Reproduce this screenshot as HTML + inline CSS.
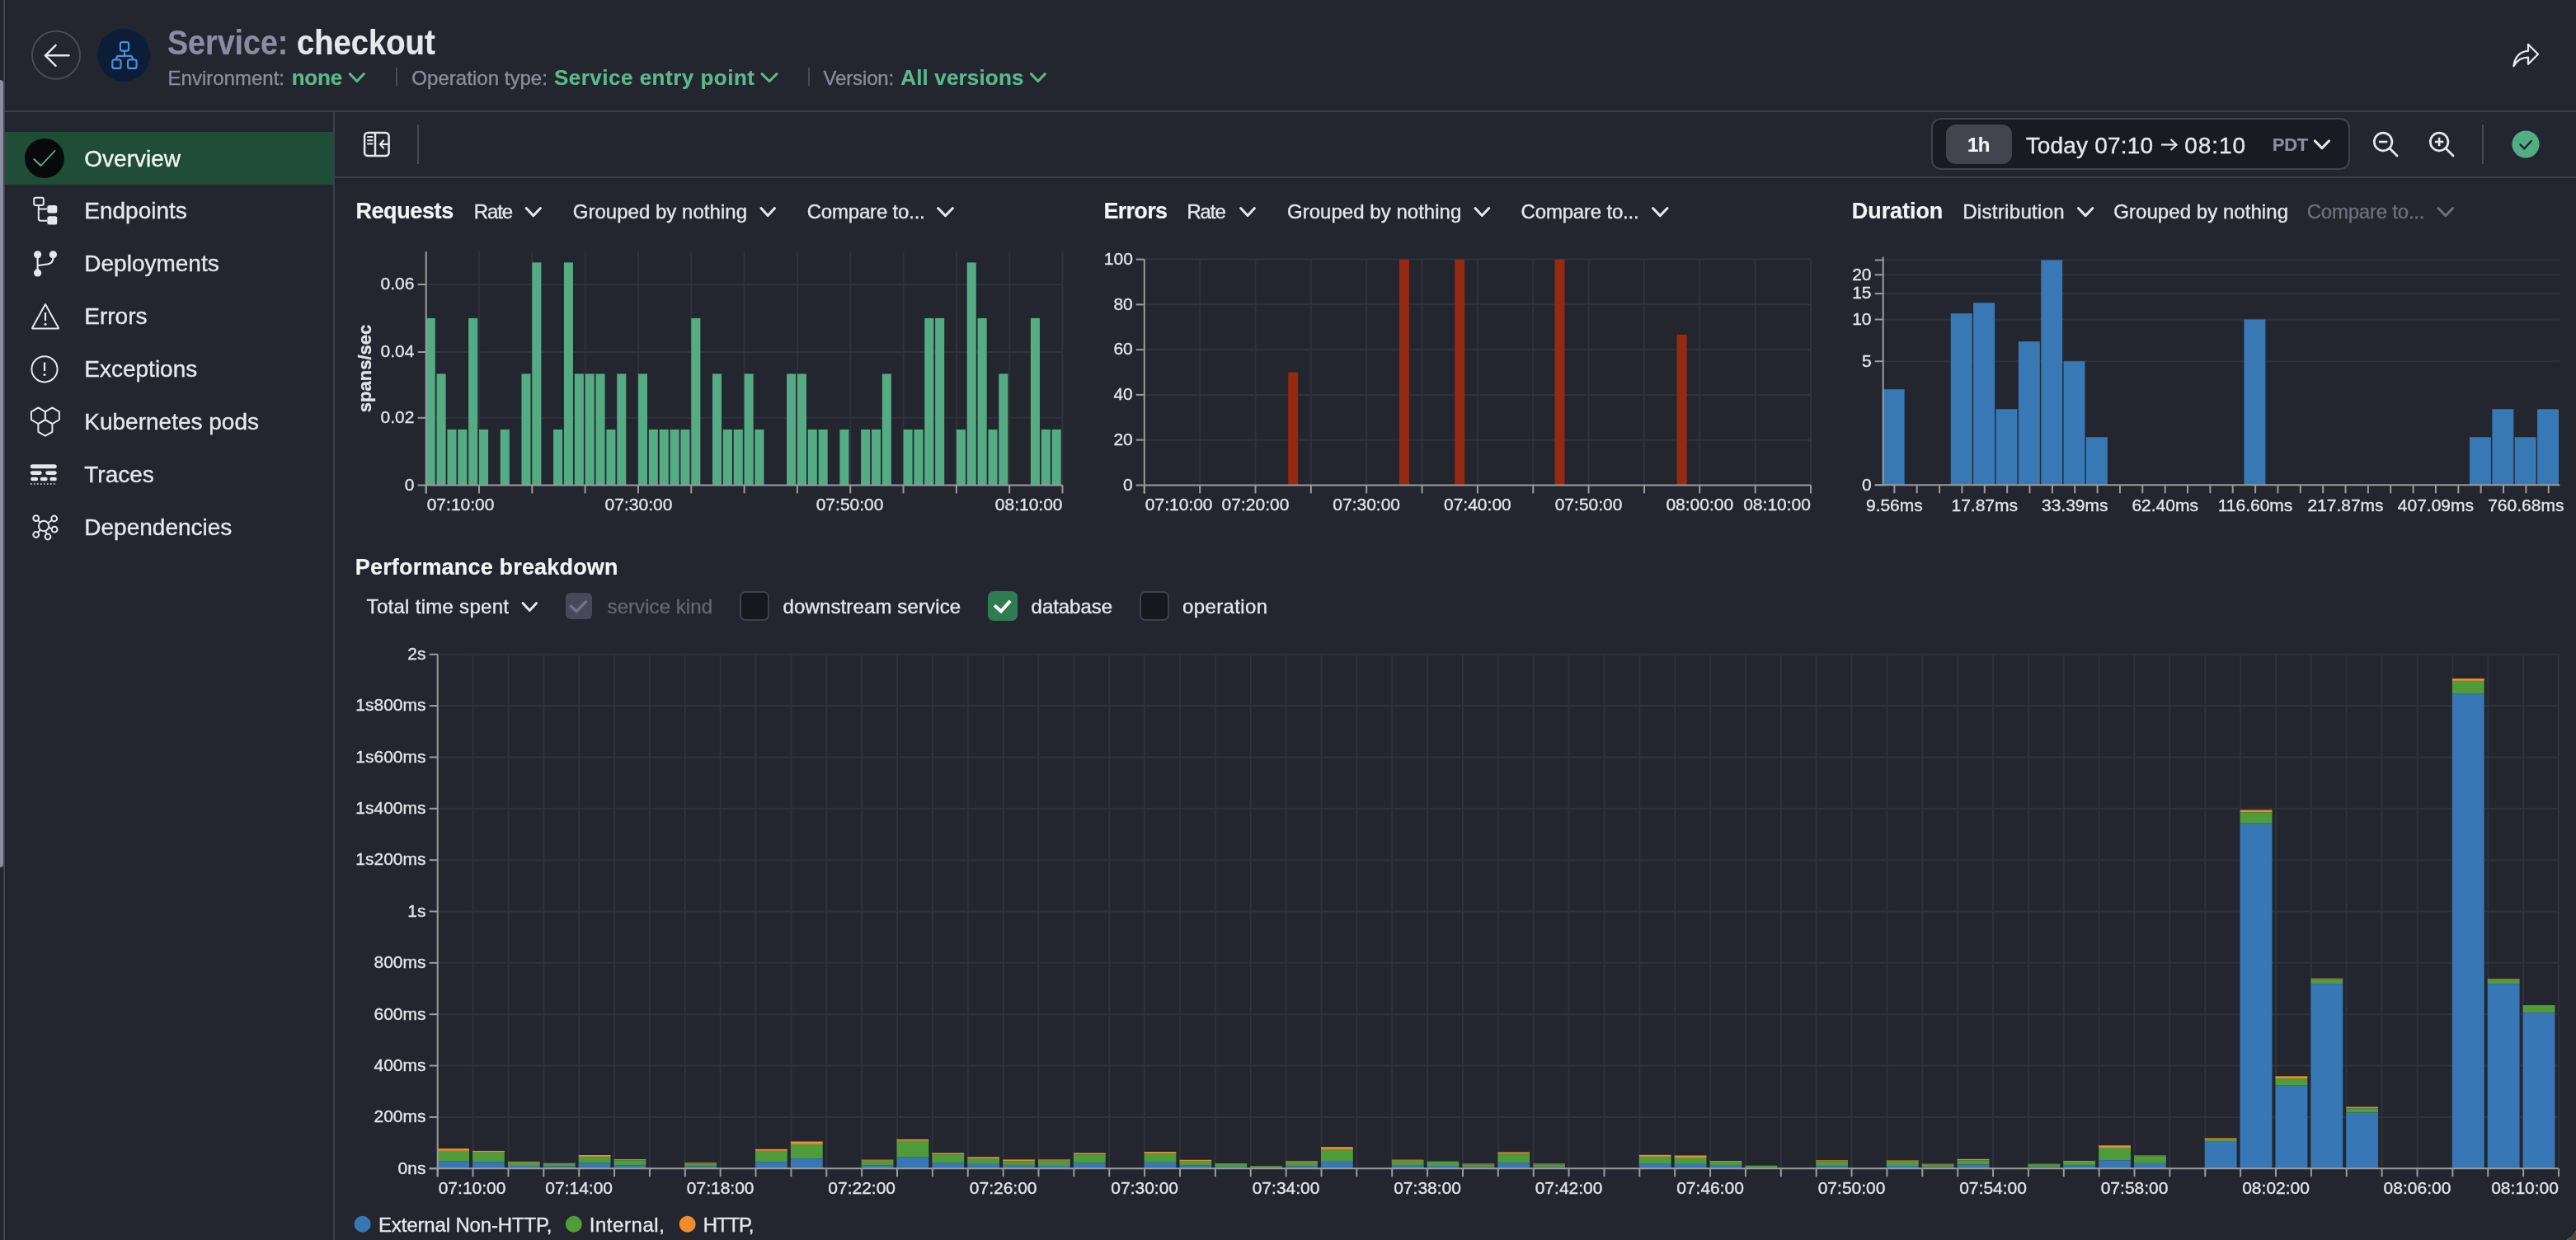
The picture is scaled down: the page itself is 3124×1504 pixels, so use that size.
<!DOCTYPE html><html><head><meta charset="utf-8"><title>Service: checkout</title><style>
html,body{margin:0;padding:0;width:3124px;height:1504px;overflow:hidden;background:#23262e;}
.t{position:absolute;font-family:"Liberation Sans",sans-serif;white-space:pre;-webkit-font-smoothing:antialiased;-webkit-text-stroke:0.35px currentColor;}
#tx{position:absolute;left:0;top:0;width:3124px;height:1504px;will-change:transform;}
</style></head><body>
<div style="position:absolute;left:3px;top:0;width:1px;height:1504px;background:#1f2026"></div>
<div style="position:absolute;left:0;top:97px;width:4px;height:955px;background:#8b8da1;border-radius:0 4px 4px 0"></div>
<div style="position:absolute;left:4px;top:0;width:2px;height:1504px;background:#454654"></div>
<div style="position:absolute;left:6px;top:0;width:1px;height:1504px;background:#1f2026"></div>
<div style="position:absolute;left:6px;top:134px;width:3118px;height:2px;background:#3b3e4a"></div>
<div style="position:absolute;left:479.5px;top:82px;width:2px;height:21.5px;background:#474957"></div>
<div style="position:absolute;left:980px;top:82px;width:2px;height:21.5px;background:#474957"></div>
<div style="position:absolute;left:404px;top:136px;width:2px;height:1368px;background:#3b3e4a"></div>
<div style="position:absolute;left:6px;top:160px;width:398px;height:64px;background:#1f4d37"></div>
<div style="position:absolute;left:406px;top:214px;width:2718px;height:2px;background:#3b3e4a"></div>
<div style="position:absolute;left:506px;top:151px;width:2px;height:48px;background:#464856"></div>
<div style="position:absolute;left:2342.4px;top:143px;width:507.3px;height:63px;box-sizing:border-box;border:2px solid #40424f;border-radius:12px;background:#1a1b22"></div>
<div style="position:absolute;left:2360.2px;top:151.1px;width:79.5px;height:48px;border-radius:12px;background:#42444f"></div>
<div style="position:absolute;left:3010px;top:151px;width:2px;height:48px;background:#464856"></div>
<div style="position:absolute;left:686.2px;top:719.4px;width:31.4px;height:31.5px;border-radius:6px;background:#474959"></div>
<div style="position:absolute;left:897.3px;top:717.4px;width:35.6px;height:35.4px;box-sizing:border-box;border-radius:7px;background:#17181e;border:2px solid #3e404d"></div>
<div style="position:absolute;left:1198px;top:717.1px;width:35.8px;height:35.8px;border-radius:7px;background:#2f7b52"></div>
<div style="position:absolute;left:1382.3px;top:717.4px;width:35.6px;height:35.4px;box-sizing:border-box;border-radius:7px;background:#17181e;border:2px solid #3e404d"></div>
<svg width="3124" height="1504" viewBox="0 0 3124 1504" style="position:absolute;left:0;top:0">
<circle cx="68" cy="66.8" r="29" fill="none" stroke="#474957" stroke-width="2"/>
<polyline points="67.6,54.8 55,67.3 67.6,79.8" fill="none" stroke="#e6e7eb" stroke-width="2.4" stroke-linecap="round" stroke-linejoin="round"/>
<line x1="55" y1="67.3" x2="83.5" y2="67.3" stroke="#e6e7eb" stroke-width="2.4" stroke-linecap="round"/>
<circle cx="150.1" cy="67" r="32" fill="#0c1e37"/>
<rect x="145.9" y="51.1" width="10.2" height="10.6" rx="2.5" fill="none" stroke="#4f8fd6" stroke-width="2.2"/>
<rect x="136.3" y="72.3" width="10.2" height="10.6" rx="2.5" fill="none" stroke="#4f8fd6" stroke-width="2.2"/>
<rect x="155.1" y="72.3" width="10.5" height="10.6" rx="2.5" fill="none" stroke="#4f8fd6" stroke-width="2.2"/>
<path d="M151,61.7 V67.8 M141.4,72.3 V70.5 Q141.4,67.8 144,67.8 H158 Q160.6,67.8 160.6,70.5 V72.3" fill="none" stroke="#4f8fd6" stroke-width="2.2"/>
<polyline points="424.3,89.6 432.8,98.5 441.3,89.6" fill="none" stroke="#5bb98c" stroke-width="3" stroke-linecap="round" stroke-linejoin="round"/>
<polyline points="924.0,89.6 933.0,98.5 942.0,89.6" fill="none" stroke="#5bb98c" stroke-width="3" stroke-linecap="round" stroke-linejoin="round"/>
<polyline points="1250.4,89.6 1258.8,98.5 1267.3,89.6" fill="none" stroke="#5bb98c" stroke-width="3" stroke-linecap="round" stroke-linejoin="round"/>
<path d="M3048.4,80.2 C3049.5,69 3056.5,62 3066,61.8 V53.8 L3078,65.8 L3066,77.8 V69.6 C3058,69.6 3052.5,72.5 3048.4,80.2 Z" fill="none" stroke="#e6e7eb" stroke-width="2.3" stroke-linejoin="round"/>
<circle cx="54" cy="192" r="24" fill="#08090b"/>
<polyline points="41.2,193 49.6,201 66.5,183" fill="none" stroke="#5bb98c" stroke-width="1.8" stroke-linecap="round" stroke-linejoin="round"/>
<rect x="41.2" y="239.8" width="11.6" height="9.2" rx="2" fill="none" stroke="#e6e7eb" stroke-width="2"/>
<path d="M46.8,249 V265 Q46.8,267.8 49.5,267.8 H57" fill="none" stroke="#e6e7eb" stroke-width="2"/>
<path d="M46.8,253.5 H57" fill="none" stroke="#e6e7eb" stroke-width="2"/>
<rect x="57.3" y="249" width="12" height="9.6" rx="2.5" fill="#e6e7eb"/>
<rect x="57.3" y="262.2" width="12" height="10.4" rx="2.5" fill="#e6e7eb"/>
<circle cx="45.6" cy="308.8" r="4.6" fill="#e6e7eb"/><circle cx="64.4" cy="308.8" r="4.6" fill="#e6e7eb"/><circle cx="45.6" cy="330.9" r="4.6" fill="#e6e7eb"/>
<path d="M45.6,309 V331 M64.4,309 V313 Q64.4,319.5 57,320.5 L45.6,322" fill="none" stroke="#e6e7eb" stroke-width="2.2"/>
<path d="M55,369 L70.8,397.5 Q71.2,398.6 70,398.6 H40 Q38.8,398.6 39.2,397.5 Z" fill="none" stroke="#e6e7eb" stroke-width="2" stroke-linejoin="round"/>
<line x1="55" y1="379" x2="55" y2="389" stroke="#e6e7eb" stroke-width="2.2"/><circle cx="55" cy="393.2" r="1.5" fill="#e6e7eb"/>
<circle cx="54" cy="447.8" r="15.6" fill="none" stroke="#e6e7eb" stroke-width="2"/>
<line x1="54" y1="439.5" x2="54" y2="450" stroke="#e6e7eb" stroke-width="2.2"/><circle cx="54" cy="454.5" r="1.5" fill="#e6e7eb"/>
<polygon points="54.90,509.10 46.41,514.00 37.93,509.10 37.93,499.30 46.41,494.40 54.90,499.30" fill="none" stroke="#e6e7eb" stroke-width="2" stroke-linejoin="round"/>
<polygon points="71.87,509.10 63.39,514.00 54.90,509.10 54.90,499.30 63.39,494.40 71.87,499.30" fill="none" stroke="#e6e7eb" stroke-width="2" stroke-linejoin="round"/>
<polygon points="63.39,523.80 54.90,528.70 46.41,523.80 46.41,514.00 54.90,509.10 63.39,514.00" fill="none" stroke="#e6e7eb" stroke-width="2" stroke-linejoin="round"/>
<rect x="36.8" y="563.3" width="32" height="5" rx="2.5" fill="#e6e7eb"/>
<rect x="36.8" y="571.3" width="14" height="4.6" rx="2.3" fill="#e6e7eb"/><rect x="55.2" y="571.3" width="13.6" height="4.6" rx="2.3" fill="#e6e7eb"/>
<rect x="37.2" y="578.8" width="9" height="4.4" rx="2.2" fill="#e6e7eb"/><rect x="48.7" y="578.8" width="9" height="4.4" rx="2.2" fill="#e6e7eb"/><rect x="60.3" y="578.8" width="8.5" height="4.4" rx="2.2" fill="#e6e7eb"/>
<line x1="37" y1="587" x2="69" y2="587" stroke="#e6e7eb" stroke-width="1.6" stroke-dasharray="1.6,2.4"/>
<line x1="53.1" y1="638" x2="43.7" y2="628.6" stroke="#e6e7eb" stroke-width="2"/>
<line x1="53.1" y1="638" x2="65.7" y2="629" stroke="#e6e7eb" stroke-width="2"/>
<line x1="53.1" y1="638" x2="66.1" y2="642.2" stroke="#e6e7eb" stroke-width="2"/>
<line x1="53.1" y1="638" x2="43.7" y2="648.5" stroke="#e6e7eb" stroke-width="2"/>
<line x1="53.1" y1="638" x2="58" y2="651" stroke="#e6e7eb" stroke-width="2"/>
<circle cx="53.1" cy="638" r="6.2" fill="#23262e" stroke="#e6e7eb" stroke-width="2"/>
<circle cx="43.7" cy="628.6" r="3.4" fill="#23262e" stroke="#e6e7eb" stroke-width="2"/>
<circle cx="65.7" cy="629" r="3.4" fill="#23262e" stroke="#e6e7eb" stroke-width="2"/>
<circle cx="66.1" cy="642.2" r="3.4" fill="#23262e" stroke="#e6e7eb" stroke-width="2"/>
<circle cx="43.7" cy="648.5" r="3.4" fill="#23262e" stroke="#e6e7eb" stroke-width="2"/>
<circle cx="58" cy="651" r="3.4" fill="#23262e" stroke="#e6e7eb" stroke-width="2"/>
<rect x="442.1" y="161" width="29.5" height="28" rx="4" fill="none" stroke="#e6e7eb" stroke-width="2.5"/>
<line x1="455" y1="161" x2="455" y2="189" stroke="#e6e7eb" stroke-width="2.5"/>
<line x1="446" y1="166" x2="451.5" y2="166" stroke="#e6e7eb" stroke-width="2" stroke-linecap="round"/>
<line x1="446" y1="170.3" x2="451.5" y2="170.3" stroke="#e6e7eb" stroke-width="2" stroke-linecap="round"/>
<line x1="446" y1="174.6" x2="451.5" y2="174.6" stroke="#e6e7eb" stroke-width="2" stroke-linecap="round"/>
<polyline points="465,170.5 461,175 465,179.5" fill="none" stroke="#e6e7eb" stroke-width="2.2" stroke-linecap="round" stroke-linejoin="round"/><line x1="461.5" y1="175" x2="471" y2="175" stroke="#e6e7eb" stroke-width="2.2"/>
<line x1="2621" y1="175.5" x2="2639" y2="175.5" stroke="#e6e7eb" stroke-width="2.2"/><polyline points="2632.5,169 2639.5,175.5 2632.5,182" fill="none" stroke="#e6e7eb" stroke-width="2.2" stroke-linejoin="miter"/>
<polyline points="2807.3,170.9 2815.9,179.6 2824.5,170.9" fill="none" stroke="#e6e7eb" stroke-width="3" stroke-linecap="round" stroke-linejoin="round"/>
<circle cx="2890.1" cy="172" r="10.8" fill="none" stroke="#e6e7eb" stroke-width="2.7"/>
<line x1="2898.1" y1="180" x2="2907.1" y2="189" stroke="#e6e7eb" stroke-width="2.7" stroke-linecap="round"/>
<line x1="2884.9" y1="172" x2="2895.3" y2="172" stroke="#e6e7eb" stroke-width="2.6"/>
<circle cx="2958.1" cy="172" r="10.8" fill="none" stroke="#e6e7eb" stroke-width="2.7"/>
<line x1="2966.1" y1="180" x2="2975.1" y2="189" stroke="#e6e7eb" stroke-width="2.7" stroke-linecap="round"/>
<line x1="2952.9" y1="172" x2="2963.3" y2="172" stroke="#e6e7eb" stroke-width="2.6"/>
<line x1="2958.1" y1="166.8" x2="2958.1" y2="177.2" stroke="#e6e7eb" stroke-width="2.6"/>
<circle cx="3063" cy="175" r="16.6" fill="#52ad84"/>
<polyline points="3056.4,175.4 3061.3,180.3 3069.8,170.9" fill="none" stroke="#1f2127" stroke-width="2.3" stroke-linecap="round" stroke-linejoin="miter"/>
<polyline points="638.2,252.5 646.8,261.6 655.4,252.5" fill="none" stroke="#e6e7eb" stroke-width="3" stroke-linecap="round" stroke-linejoin="round"/>
<polyline points="923.0,252.5 931.2,261.6 939.5,252.5" fill="none" stroke="#e6e7eb" stroke-width="3" stroke-linecap="round" stroke-linejoin="round"/>
<polyline points="1137.6,252.5 1146.5,261.6 1155.4,252.5" fill="none" stroke="#e6e7eb" stroke-width="3" stroke-linecap="round" stroke-linejoin="round"/>
<polyline points="1504.7,252.5 1513.1,261.6 1521.4,252.5" fill="none" stroke="#e6e7eb" stroke-width="3" stroke-linecap="round" stroke-linejoin="round"/>
<polyline points="1789.0,252.5 1797.3,261.6 1805.7,252.5" fill="none" stroke="#e6e7eb" stroke-width="3" stroke-linecap="round" stroke-linejoin="round"/>
<polyline points="2004.5,252.5 2013.2,261.6 2022.0,252.5" fill="none" stroke="#e6e7eb" stroke-width="3" stroke-linecap="round" stroke-linejoin="round"/>
<polyline points="2520.5,252.5 2529.2,261.6 2537.8,252.5" fill="none" stroke="#e6e7eb" stroke-width="3" stroke-linecap="round" stroke-linejoin="round"/>
<polyline points="2957.0,252.5 2965.8,261.6 2974.6,252.5" fill="none" stroke="#6d6f80" stroke-width="3" stroke-linecap="round" stroke-linejoin="round"/>
<line x1="581.0166666666667" y1="305" x2="581.0166666666667" y2="588.4" stroke="#2f323b" stroke-width="2"/>
<line x1="645.3333333333334" y1="305" x2="645.3333333333334" y2="588.4" stroke="#2f323b" stroke-width="2"/>
<line x1="709.65" y1="305" x2="709.65" y2="588.4" stroke="#2f323b" stroke-width="2"/>
<line x1="773.9666666666667" y1="305" x2="773.9666666666667" y2="588.4" stroke="#2f323b" stroke-width="2"/>
<line x1="838.2833333333333" y1="305" x2="838.2833333333333" y2="588.4" stroke="#2f323b" stroke-width="2"/>
<line x1="902.5999999999999" y1="305" x2="902.5999999999999" y2="588.4" stroke="#2f323b" stroke-width="2"/>
<line x1="966.9166666666667" y1="305" x2="966.9166666666667" y2="588.4" stroke="#2f323b" stroke-width="2"/>
<line x1="1031.2333333333333" y1="305" x2="1031.2333333333333" y2="588.4" stroke="#2f323b" stroke-width="2"/>
<line x1="1095.5500000000002" y1="305" x2="1095.5500000000002" y2="588.4" stroke="#2f323b" stroke-width="2"/>
<line x1="1159.8666666666668" y1="305" x2="1159.8666666666668" y2="588.4" stroke="#2f323b" stroke-width="2"/>
<line x1="1224.1833333333334" y1="305" x2="1224.1833333333334" y2="588.4" stroke="#2f323b" stroke-width="2"/>
<line x1="1288.5" y1="305" x2="1288.5" y2="588.4" stroke="#2f323b" stroke-width="2"/>
<line x1="516.7" y1="506.8" x2="1288.5" y2="506.8" stroke="#2f323b" stroke-width="2"/>
<line x1="516.7" y1="427" x2="1288.5" y2="427" stroke="#2f323b" stroke-width="2"/>
<line x1="516.7" y1="345" x2="1288.5" y2="345" stroke="#2f323b" stroke-width="2"/>
<rect x="516.70" y="385.90" width="11.06" height="202.50" fill="#55ab84"/>
<rect x="529.56" y="453.40" width="11.06" height="135.00" fill="#55ab84"/>
<rect x="542.43" y="520.90" width="11.06" height="67.50" fill="#55ab84"/>
<rect x="555.29" y="520.90" width="11.06" height="67.50" fill="#55ab84"/>
<rect x="568.15" y="385.90" width="11.06" height="202.50" fill="#55ab84"/>
<rect x="581.02" y="520.90" width="11.06" height="67.50" fill="#55ab84"/>
<rect x="606.74" y="520.90" width="11.06" height="67.50" fill="#55ab84"/>
<rect x="632.47" y="453.40" width="11.06" height="135.00" fill="#55ab84"/>
<rect x="645.33" y="318.40" width="11.06" height="270.00" fill="#55ab84"/>
<rect x="671.06" y="520.90" width="11.06" height="67.50" fill="#55ab84"/>
<rect x="683.92" y="318.40" width="11.06" height="270.00" fill="#55ab84"/>
<rect x="696.79" y="453.40" width="11.06" height="135.00" fill="#55ab84"/>
<rect x="709.65" y="453.40" width="11.06" height="135.00" fill="#55ab84"/>
<rect x="722.51" y="453.40" width="11.06" height="135.00" fill="#55ab84"/>
<rect x="735.38" y="520.90" width="11.06" height="67.50" fill="#55ab84"/>
<rect x="748.24" y="453.40" width="11.06" height="135.00" fill="#55ab84"/>
<rect x="773.97" y="453.40" width="11.06" height="135.00" fill="#55ab84"/>
<rect x="786.83" y="520.90" width="11.06" height="67.50" fill="#55ab84"/>
<rect x="799.69" y="520.90" width="11.06" height="67.50" fill="#55ab84"/>
<rect x="812.56" y="520.90" width="11.06" height="67.50" fill="#55ab84"/>
<rect x="825.42" y="520.90" width="11.06" height="67.50" fill="#55ab84"/>
<rect x="838.28" y="385.90" width="11.06" height="202.50" fill="#55ab84"/>
<rect x="864.01" y="453.40" width="11.06" height="135.00" fill="#55ab84"/>
<rect x="876.87" y="520.90" width="11.06" height="67.50" fill="#55ab84"/>
<rect x="889.74" y="520.90" width="11.06" height="67.50" fill="#55ab84"/>
<rect x="902.60" y="453.40" width="11.06" height="135.00" fill="#55ab84"/>
<rect x="915.46" y="520.90" width="11.06" height="67.50" fill="#55ab84"/>
<rect x="954.05" y="453.40" width="11.06" height="135.00" fill="#55ab84"/>
<rect x="966.92" y="453.40" width="11.06" height="135.00" fill="#55ab84"/>
<rect x="979.78" y="520.90" width="11.06" height="67.50" fill="#55ab84"/>
<rect x="992.64" y="520.90" width="11.06" height="67.50" fill="#55ab84"/>
<rect x="1018.37" y="520.90" width="11.06" height="67.50" fill="#55ab84"/>
<rect x="1044.10" y="520.90" width="11.06" height="67.50" fill="#55ab84"/>
<rect x="1056.96" y="520.90" width="11.06" height="67.50" fill="#55ab84"/>
<rect x="1069.82" y="453.40" width="11.06" height="135.00" fill="#55ab84"/>
<rect x="1095.55" y="520.90" width="11.06" height="67.50" fill="#55ab84"/>
<rect x="1108.41" y="520.90" width="11.06" height="67.50" fill="#55ab84"/>
<rect x="1121.28" y="385.90" width="11.06" height="202.50" fill="#55ab84"/>
<rect x="1134.14" y="385.90" width="11.06" height="202.50" fill="#55ab84"/>
<rect x="1159.87" y="520.90" width="11.06" height="67.50" fill="#55ab84"/>
<rect x="1172.73" y="318.40" width="11.06" height="270.00" fill="#55ab84"/>
<rect x="1185.59" y="385.90" width="11.06" height="202.50" fill="#55ab84"/>
<rect x="1198.46" y="520.90" width="11.06" height="67.50" fill="#55ab84"/>
<rect x="1211.32" y="453.40" width="11.06" height="135.00" fill="#55ab84"/>
<rect x="1249.91" y="385.90" width="11.06" height="202.50" fill="#55ab84"/>
<rect x="1262.77" y="520.90" width="11.06" height="67.50" fill="#55ab84"/>
<rect x="1275.64" y="520.90" width="11.06" height="67.50" fill="#55ab84"/>
<line x1="516.7" y1="305" x2="516.7" y2="598.4" stroke="#9b9b9b" stroke-width="2"/>
<line x1="506.70000000000005" y1="588.4" x2="1288.5" y2="588.4" stroke="#9b9b9b" stroke-width="2"/>
<line x1="506.70000000000005" y1="506.8" x2="516.7" y2="506.8" stroke="#9b9b9b" stroke-width="2"/>
<line x1="506.70000000000005" y1="427" x2="516.7" y2="427" stroke="#9b9b9b" stroke-width="2"/>
<line x1="506.70000000000005" y1="345" x2="516.7" y2="345" stroke="#9b9b9b" stroke-width="2"/>
<line x1="516.7" y1="588.4" x2="516.7" y2="598.4" stroke="#9b9b9b" stroke-width="2"/>
<line x1="581.0166666666667" y1="588.4" x2="581.0166666666667" y2="598.4" stroke="#9b9b9b" stroke-width="2"/>
<line x1="645.3333333333334" y1="588.4" x2="645.3333333333334" y2="598.4" stroke="#9b9b9b" stroke-width="2"/>
<line x1="709.65" y1="588.4" x2="709.65" y2="598.4" stroke="#9b9b9b" stroke-width="2"/>
<line x1="773.9666666666667" y1="588.4" x2="773.9666666666667" y2="598.4" stroke="#9b9b9b" stroke-width="2"/>
<line x1="838.2833333333333" y1="588.4" x2="838.2833333333333" y2="598.4" stroke="#9b9b9b" stroke-width="2"/>
<line x1="902.5999999999999" y1="588.4" x2="902.5999999999999" y2="598.4" stroke="#9b9b9b" stroke-width="2"/>
<line x1="966.9166666666667" y1="588.4" x2="966.9166666666667" y2="598.4" stroke="#9b9b9b" stroke-width="2"/>
<line x1="1031.2333333333333" y1="588.4" x2="1031.2333333333333" y2="598.4" stroke="#9b9b9b" stroke-width="2"/>
<line x1="1095.5500000000002" y1="588.4" x2="1095.5500000000002" y2="598.4" stroke="#9b9b9b" stroke-width="2"/>
<line x1="1159.8666666666668" y1="588.4" x2="1159.8666666666668" y2="598.4" stroke="#9b9b9b" stroke-width="2"/>
<line x1="1224.1833333333334" y1="588.4" x2="1224.1833333333334" y2="598.4" stroke="#9b9b9b" stroke-width="2"/>
<line x1="1288.5" y1="588.4" x2="1288.5" y2="598.4" stroke="#9b9b9b" stroke-width="2"/>
<line x1="1455.1499999999999" y1="314.6" x2="1455.1499999999999" y2="588.4" stroke="#2f323b" stroke-width="2"/>
<line x1="1522.5" y1="314.6" x2="1522.5" y2="588.4" stroke="#2f323b" stroke-width="2"/>
<line x1="1589.85" y1="314.6" x2="1589.85" y2="588.4" stroke="#2f323b" stroke-width="2"/>
<line x1="1657.2" y1="314.6" x2="1657.2" y2="588.4" stroke="#2f323b" stroke-width="2"/>
<line x1="1724.55" y1="314.6" x2="1724.55" y2="588.4" stroke="#2f323b" stroke-width="2"/>
<line x1="1791.9" y1="314.6" x2="1791.9" y2="588.4" stroke="#2f323b" stroke-width="2"/>
<line x1="1859.25" y1="314.6" x2="1859.25" y2="588.4" stroke="#2f323b" stroke-width="2"/>
<line x1="1926.6" y1="314.6" x2="1926.6" y2="588.4" stroke="#2f323b" stroke-width="2"/>
<line x1="1993.9499999999998" y1="314.6" x2="1993.9499999999998" y2="588.4" stroke="#2f323b" stroke-width="2"/>
<line x1="2061.3" y1="314.6" x2="2061.3" y2="588.4" stroke="#2f323b" stroke-width="2"/>
<line x1="2128.65" y1="314.6" x2="2128.65" y2="588.4" stroke="#2f323b" stroke-width="2"/>
<line x1="2196.0" y1="314.6" x2="2196.0" y2="588.4" stroke="#2f323b" stroke-width="2"/>
<line x1="1387.8" y1="533.64" x2="2196" y2="533.64" stroke="#2f323b" stroke-width="2"/>
<line x1="1387.8" y1="478.88" x2="2196" y2="478.88" stroke="#2f323b" stroke-width="2"/>
<line x1="1387.8" y1="424.12" x2="2196" y2="424.12" stroke="#2f323b" stroke-width="2"/>
<line x1="1387.8" y1="369.36" x2="2196" y2="369.36" stroke="#2f323b" stroke-width="2"/>
<line x1="1387.8" y1="314.6" x2="2196" y2="314.6" stroke="#2f323b" stroke-width="2"/>
<rect x="1562.21" y="451.50" width="11.97" height="136.90" fill="#952912"/>
<rect x="1696.91" y="314.60" width="11.97" height="273.80" fill="#952912"/>
<rect x="1764.26" y="314.60" width="11.97" height="273.80" fill="#952912"/>
<rect x="1885.49" y="314.60" width="11.97" height="273.80" fill="#952912"/>
<rect x="2033.66" y="405.78" width="11.97" height="182.62" fill="#952912"/>
<line x1="1387.8" y1="314.6" x2="1387.8" y2="598.4" stroke="#9b9b9b" stroke-width="2"/>
<line x1="1377.8" y1="588.4" x2="2196" y2="588.4" stroke="#9b9b9b" stroke-width="2"/>
<line x1="1377.8" y1="533.64" x2="1387.8" y2="533.64" stroke="#9b9b9b" stroke-width="2"/>
<line x1="1377.8" y1="478.88" x2="1387.8" y2="478.88" stroke="#9b9b9b" stroke-width="2"/>
<line x1="1377.8" y1="424.12" x2="1387.8" y2="424.12" stroke="#9b9b9b" stroke-width="2"/>
<line x1="1377.8" y1="369.36" x2="1387.8" y2="369.36" stroke="#9b9b9b" stroke-width="2"/>
<line x1="1377.8" y1="314.6" x2="1387.8" y2="314.6" stroke="#9b9b9b" stroke-width="2"/>
<line x1="1387.8" y1="588.4" x2="1387.8" y2="598.4" stroke="#9b9b9b" stroke-width="2"/>
<line x1="1455.1499999999999" y1="588.4" x2="1455.1499999999999" y2="598.4" stroke="#9b9b9b" stroke-width="2"/>
<line x1="1522.5" y1="588.4" x2="1522.5" y2="598.4" stroke="#9b9b9b" stroke-width="2"/>
<line x1="1589.85" y1="588.4" x2="1589.85" y2="598.4" stroke="#9b9b9b" stroke-width="2"/>
<line x1="1657.2" y1="588.4" x2="1657.2" y2="598.4" stroke="#9b9b9b" stroke-width="2"/>
<line x1="1724.55" y1="588.4" x2="1724.55" y2="598.4" stroke="#9b9b9b" stroke-width="2"/>
<line x1="1791.9" y1="588.4" x2="1791.9" y2="598.4" stroke="#9b9b9b" stroke-width="2"/>
<line x1="1859.25" y1="588.4" x2="1859.25" y2="598.4" stroke="#9b9b9b" stroke-width="2"/>
<line x1="1926.6" y1="588.4" x2="1926.6" y2="598.4" stroke="#9b9b9b" stroke-width="2"/>
<line x1="1993.9499999999998" y1="588.4" x2="1993.9499999999998" y2="598.4" stroke="#9b9b9b" stroke-width="2"/>
<line x1="2061.3" y1="588.4" x2="2061.3" y2="598.4" stroke="#9b9b9b" stroke-width="2"/>
<line x1="2128.65" y1="588.4" x2="2128.65" y2="598.4" stroke="#9b9b9b" stroke-width="2"/>
<line x1="2196.0" y1="588.4" x2="2196.0" y2="598.4" stroke="#9b9b9b" stroke-width="2"/>
<line x1="2283.7" y1="315.43441494070083" x2="3104.4" y2="315.43441494070083" stroke="#2f323b" stroke-width="2"/>
<line x1="2283.7" y1="333.32124584066327" x2="3104.4" y2="333.32124584066327" stroke="#2f323b" stroke-width="2"/>
<line x1="2283.7" y1="356.0956945124183" x2="3104.4" y2="356.0956945124183" stroke="#2f323b" stroke-width="2"/>
<line x1="2283.7" y1="387.4762709031364" x2="3104.4" y2="387.4762709031364" stroke="#2f323b" stroke-width="2"/>
<line x1="2283.7" y1="438.2401444521504" x2="3104.4" y2="438.2401444521504" stroke="#2f323b" stroke-width="2"/>
<rect x="2283.70" y="472.20" width="25.96" height="116.10" fill="#3878b5"/>
<rect x="2365.77" y="380.19" width="25.96" height="208.11" fill="#3878b5"/>
<rect x="2393.13" y="367.28" width="25.96" height="221.02" fill="#3878b5"/>
<rect x="2420.48" y="496.29" width="25.96" height="92.01" fill="#3878b5"/>
<rect x="2447.84" y="414.15" width="25.96" height="174.15" fill="#3878b5"/>
<rect x="2475.20" y="315.43" width="25.96" height="272.87" fill="#3878b5"/>
<rect x="2502.55" y="438.24" width="25.96" height="150.06" fill="#3878b5"/>
<rect x="2529.91" y="530.25" width="25.96" height="58.05" fill="#3878b5"/>
<rect x="2721.41" y="387.48" width="25.96" height="200.82" fill="#3878b5"/>
<rect x="2994.97" y="530.25" width="25.96" height="58.05" fill="#3878b5"/>
<rect x="3022.33" y="496.29" width="25.96" height="92.01" fill="#3878b5"/>
<rect x="3049.69" y="530.25" width="25.96" height="58.05" fill="#3878b5"/>
<rect x="3077.04" y="496.29" width="25.96" height="92.01" fill="#3878b5"/>
<line x1="2283.7" y1="311.5" x2="2283.7" y2="589.3" stroke="#9b9b9b" stroke-width="2"/>
<line x1="2273.7" y1="588.3" x2="3104.4" y2="588.3" stroke="#9b9b9b" stroke-width="2"/>
<line x1="2273.7" y1="315.43441494070083" x2="2283.7" y2="315.43441494070083" stroke="#9b9b9b" stroke-width="2"/>
<line x1="2273.7" y1="333.32124584066327" x2="2283.7" y2="333.32124584066327" stroke="#9b9b9b" stroke-width="2"/>
<line x1="2273.7" y1="356.0956945124183" x2="2283.7" y2="356.0956945124183" stroke="#9b9b9b" stroke-width="2"/>
<line x1="2273.7" y1="387.4762709031364" x2="2283.7" y2="387.4762709031364" stroke="#9b9b9b" stroke-width="2"/>
<line x1="2273.7" y1="438.2401444521504" x2="2283.7" y2="438.2401444521504" stroke="#9b9b9b" stroke-width="2"/>
<line x1="2273.7" y1="588.3" x2="2283.7" y2="588.3" stroke="#9b9b9b" stroke-width="2"/>
<line x1="2297.378333333333" y1="588.3" x2="2297.378333333333" y2="598.3" stroke="#9b9b9b" stroke-width="2"/>
<line x1="2324.7349999999997" y1="588.3" x2="2324.7349999999997" y2="598.3" stroke="#9b9b9b" stroke-width="2"/>
<line x1="2352.0916666666667" y1="588.3" x2="2352.0916666666667" y2="598.3" stroke="#9b9b9b" stroke-width="2"/>
<line x1="2379.4483333333333" y1="588.3" x2="2379.4483333333333" y2="598.3" stroke="#9b9b9b" stroke-width="2"/>
<line x1="2406.805" y1="588.3" x2="2406.805" y2="598.3" stroke="#9b9b9b" stroke-width="2"/>
<line x1="2434.1616666666664" y1="588.3" x2="2434.1616666666664" y2="598.3" stroke="#9b9b9b" stroke-width="2"/>
<line x1="2461.5183333333334" y1="588.3" x2="2461.5183333333334" y2="598.3" stroke="#9b9b9b" stroke-width="2"/>
<line x1="2488.875" y1="588.3" x2="2488.875" y2="598.3" stroke="#9b9b9b" stroke-width="2"/>
<line x1="2516.2316666666666" y1="588.3" x2="2516.2316666666666" y2="598.3" stroke="#9b9b9b" stroke-width="2"/>
<line x1="2543.588333333333" y1="588.3" x2="2543.588333333333" y2="598.3" stroke="#9b9b9b" stroke-width="2"/>
<line x1="2570.9449999999997" y1="588.3" x2="2570.9449999999997" y2="598.3" stroke="#9b9b9b" stroke-width="2"/>
<line x1="2598.3016666666667" y1="588.3" x2="2598.3016666666667" y2="598.3" stroke="#9b9b9b" stroke-width="2"/>
<line x1="2625.6583333333333" y1="588.3" x2="2625.6583333333333" y2="598.3" stroke="#9b9b9b" stroke-width="2"/>
<line x1="2653.015" y1="588.3" x2="2653.015" y2="598.3" stroke="#9b9b9b" stroke-width="2"/>
<line x1="2680.3716666666664" y1="588.3" x2="2680.3716666666664" y2="598.3" stroke="#9b9b9b" stroke-width="2"/>
<line x1="2707.7283333333335" y1="588.3" x2="2707.7283333333335" y2="598.3" stroke="#9b9b9b" stroke-width="2"/>
<line x1="2735.085" y1="588.3" x2="2735.085" y2="598.3" stroke="#9b9b9b" stroke-width="2"/>
<line x1="2762.4416666666666" y1="588.3" x2="2762.4416666666666" y2="598.3" stroke="#9b9b9b" stroke-width="2"/>
<line x1="2789.798333333333" y1="588.3" x2="2789.798333333333" y2="598.3" stroke="#9b9b9b" stroke-width="2"/>
<line x1="2817.1549999999997" y1="588.3" x2="2817.1549999999997" y2="598.3" stroke="#9b9b9b" stroke-width="2"/>
<line x1="2844.5116666666668" y1="588.3" x2="2844.5116666666668" y2="598.3" stroke="#9b9b9b" stroke-width="2"/>
<line x1="2871.8683333333333" y1="588.3" x2="2871.8683333333333" y2="598.3" stroke="#9b9b9b" stroke-width="2"/>
<line x1="2899.225" y1="588.3" x2="2899.225" y2="598.3" stroke="#9b9b9b" stroke-width="2"/>
<line x1="2926.581666666667" y1="588.3" x2="2926.581666666667" y2="598.3" stroke="#9b9b9b" stroke-width="2"/>
<line x1="2953.9383333333335" y1="588.3" x2="2953.9383333333335" y2="598.3" stroke="#9b9b9b" stroke-width="2"/>
<line x1="2981.295" y1="588.3" x2="2981.295" y2="598.3" stroke="#9b9b9b" stroke-width="2"/>
<line x1="3008.6516666666666" y1="588.3" x2="3008.6516666666666" y2="598.3" stroke="#9b9b9b" stroke-width="2"/>
<line x1="3036.008333333333" y1="588.3" x2="3036.008333333333" y2="598.3" stroke="#9b9b9b" stroke-width="2"/>
<line x1="3063.3650000000002" y1="588.3" x2="3063.3650000000002" y2="598.3" stroke="#9b9b9b" stroke-width="2"/>
<line x1="3090.721666666667" y1="588.3" x2="3090.721666666667" y2="598.3" stroke="#9b9b9b" stroke-width="2"/>
<polyline points="634.0,731.5 642.3,740.5 650.6,731.5" fill="none" stroke="#e6e7eb" stroke-width="3" stroke-linecap="round" stroke-linejoin="round"/>
<polyline points="691.6,734.3 699,741.6 711.5,728.8" fill="none" stroke="#717386" stroke-width="3.4" stroke-linecap="butt" stroke-linejoin="miter"/>
<polyline points="1206,734.3 1214,741.4 1225.2,728.8" fill="none" stroke="#ffffff" stroke-width="4" stroke-linecap="butt" stroke-linejoin="miter"/>
<line x1="573.5716666666667" y1="793.7" x2="573.5716666666667" y2="1417.3" stroke="#2f323b" stroke-width="2"/>
<line x1="616.4433333333334" y1="793.7" x2="616.4433333333334" y2="1417.3" stroke="#2f323b" stroke-width="2"/>
<line x1="659.315" y1="793.7" x2="659.315" y2="1417.3" stroke="#2f323b" stroke-width="2"/>
<line x1="702.1866666666667" y1="793.7" x2="702.1866666666667" y2="1417.3" stroke="#2f323b" stroke-width="2"/>
<line x1="745.0583333333334" y1="793.7" x2="745.0583333333334" y2="1417.3" stroke="#2f323b" stroke-width="2"/>
<line x1="787.9300000000001" y1="793.7" x2="787.9300000000001" y2="1417.3" stroke="#2f323b" stroke-width="2"/>
<line x1="830.8016666666667" y1="793.7" x2="830.8016666666667" y2="1417.3" stroke="#2f323b" stroke-width="2"/>
<line x1="873.6733333333334" y1="793.7" x2="873.6733333333334" y2="1417.3" stroke="#2f323b" stroke-width="2"/>
<line x1="916.5450000000001" y1="793.7" x2="916.5450000000001" y2="1417.3" stroke="#2f323b" stroke-width="2"/>
<line x1="959.4166666666667" y1="793.7" x2="959.4166666666667" y2="1417.3" stroke="#2f323b" stroke-width="2"/>
<line x1="1002.2883333333334" y1="793.7" x2="1002.2883333333334" y2="1417.3" stroke="#2f323b" stroke-width="2"/>
<line x1="1045.16" y1="793.7" x2="1045.16" y2="1417.3" stroke="#2f323b" stroke-width="2"/>
<line x1="1088.0316666666668" y1="793.7" x2="1088.0316666666668" y2="1417.3" stroke="#2f323b" stroke-width="2"/>
<line x1="1130.9033333333334" y1="793.7" x2="1130.9033333333334" y2="1417.3" stroke="#2f323b" stroke-width="2"/>
<line x1="1173.775" y1="793.7" x2="1173.775" y2="1417.3" stroke="#2f323b" stroke-width="2"/>
<line x1="1216.6466666666668" y1="793.7" x2="1216.6466666666668" y2="1417.3" stroke="#2f323b" stroke-width="2"/>
<line x1="1259.5183333333334" y1="793.7" x2="1259.5183333333334" y2="1417.3" stroke="#2f323b" stroke-width="2"/>
<line x1="1302.39" y1="793.7" x2="1302.39" y2="1417.3" stroke="#2f323b" stroke-width="2"/>
<line x1="1345.2616666666668" y1="793.7" x2="1345.2616666666668" y2="1417.3" stroke="#2f323b" stroke-width="2"/>
<line x1="1388.1333333333334" y1="793.7" x2="1388.1333333333334" y2="1417.3" stroke="#2f323b" stroke-width="2"/>
<line x1="1431.005" y1="793.7" x2="1431.005" y2="1417.3" stroke="#2f323b" stroke-width="2"/>
<line x1="1473.8766666666668" y1="793.7" x2="1473.8766666666668" y2="1417.3" stroke="#2f323b" stroke-width="2"/>
<line x1="1516.7483333333334" y1="793.7" x2="1516.7483333333334" y2="1417.3" stroke="#2f323b" stroke-width="2"/>
<line x1="1559.6200000000001" y1="793.7" x2="1559.6200000000001" y2="1417.3" stroke="#2f323b" stroke-width="2"/>
<line x1="1602.4916666666668" y1="793.7" x2="1602.4916666666668" y2="1417.3" stroke="#2f323b" stroke-width="2"/>
<line x1="1645.3633333333335" y1="793.7" x2="1645.3633333333335" y2="1417.3" stroke="#2f323b" stroke-width="2"/>
<line x1="1688.2350000000001" y1="793.7" x2="1688.2350000000001" y2="1417.3" stroke="#2f323b" stroke-width="2"/>
<line x1="1731.1066666666668" y1="793.7" x2="1731.1066666666668" y2="1417.3" stroke="#2f323b" stroke-width="2"/>
<line x1="1773.9783333333335" y1="793.7" x2="1773.9783333333335" y2="1417.3" stroke="#2f323b" stroke-width="2"/>
<line x1="1816.8500000000001" y1="793.7" x2="1816.8500000000001" y2="1417.3" stroke="#2f323b" stroke-width="2"/>
<line x1="1859.7216666666668" y1="793.7" x2="1859.7216666666668" y2="1417.3" stroke="#2f323b" stroke-width="2"/>
<line x1="1902.5933333333335" y1="793.7" x2="1902.5933333333335" y2="1417.3" stroke="#2f323b" stroke-width="2"/>
<line x1="1945.4650000000001" y1="793.7" x2="1945.4650000000001" y2="1417.3" stroke="#2f323b" stroke-width="2"/>
<line x1="1988.3366666666668" y1="793.7" x2="1988.3366666666668" y2="1417.3" stroke="#2f323b" stroke-width="2"/>
<line x1="2031.2083333333335" y1="793.7" x2="2031.2083333333335" y2="1417.3" stroke="#2f323b" stroke-width="2"/>
<line x1="2074.08" y1="793.7" x2="2074.08" y2="1417.3" stroke="#2f323b" stroke-width="2"/>
<line x1="2116.951666666667" y1="793.7" x2="2116.951666666667" y2="1417.3" stroke="#2f323b" stroke-width="2"/>
<line x1="2159.8233333333337" y1="793.7" x2="2159.8233333333337" y2="1417.3" stroke="#2f323b" stroke-width="2"/>
<line x1="2202.695" y1="793.7" x2="2202.695" y2="1417.3" stroke="#2f323b" stroke-width="2"/>
<line x1="2245.5666666666666" y1="793.7" x2="2245.5666666666666" y2="1417.3" stroke="#2f323b" stroke-width="2"/>
<line x1="2288.4383333333335" y1="793.7" x2="2288.4383333333335" y2="1417.3" stroke="#2f323b" stroke-width="2"/>
<line x1="2331.3100000000004" y1="793.7" x2="2331.3100000000004" y2="1417.3" stroke="#2f323b" stroke-width="2"/>
<line x1="2374.181666666667" y1="793.7" x2="2374.181666666667" y2="1417.3" stroke="#2f323b" stroke-width="2"/>
<line x1="2417.0533333333333" y1="793.7" x2="2417.0533333333333" y2="1417.3" stroke="#2f323b" stroke-width="2"/>
<line x1="2459.925" y1="793.7" x2="2459.925" y2="1417.3" stroke="#2f323b" stroke-width="2"/>
<line x1="2502.796666666667" y1="793.7" x2="2502.796666666667" y2="1417.3" stroke="#2f323b" stroke-width="2"/>
<line x1="2545.6683333333335" y1="793.7" x2="2545.6683333333335" y2="1417.3" stroke="#2f323b" stroke-width="2"/>
<line x1="2588.54" y1="793.7" x2="2588.54" y2="1417.3" stroke="#2f323b" stroke-width="2"/>
<line x1="2631.411666666667" y1="793.7" x2="2631.411666666667" y2="1417.3" stroke="#2f323b" stroke-width="2"/>
<line x1="2674.2833333333338" y1="793.7" x2="2674.2833333333338" y2="1417.3" stroke="#2f323b" stroke-width="2"/>
<line x1="2717.1549999999997" y1="793.7" x2="2717.1549999999997" y2="1417.3" stroke="#2f323b" stroke-width="2"/>
<line x1="2760.0266666666666" y1="793.7" x2="2760.0266666666666" y2="1417.3" stroke="#2f323b" stroke-width="2"/>
<line x1="2802.8983333333335" y1="793.7" x2="2802.8983333333335" y2="1417.3" stroke="#2f323b" stroke-width="2"/>
<line x1="2845.7700000000004" y1="793.7" x2="2845.7700000000004" y2="1417.3" stroke="#2f323b" stroke-width="2"/>
<line x1="2888.6416666666664" y1="793.7" x2="2888.6416666666664" y2="1417.3" stroke="#2f323b" stroke-width="2"/>
<line x1="2931.5133333333333" y1="793.7" x2="2931.5133333333333" y2="1417.3" stroke="#2f323b" stroke-width="2"/>
<line x1="2974.385" y1="793.7" x2="2974.385" y2="1417.3" stroke="#2f323b" stroke-width="2"/>
<line x1="3017.256666666667" y1="793.7" x2="3017.256666666667" y2="1417.3" stroke="#2f323b" stroke-width="2"/>
<line x1="3060.128333333333" y1="793.7" x2="3060.128333333333" y2="1417.3" stroke="#2f323b" stroke-width="2"/>
<line x1="3103.0" y1="793.7" x2="3103.0" y2="1417.3" stroke="#2f323b" stroke-width="2"/>
<line x1="530.7" y1="1354.94" x2="3103" y2="1354.94" stroke="#2f323b" stroke-width="2"/>
<line x1="530.7" y1="1292.58" x2="3103" y2="1292.58" stroke="#2f323b" stroke-width="2"/>
<line x1="530.7" y1="1230.22" x2="3103" y2="1230.22" stroke="#2f323b" stroke-width="2"/>
<line x1="530.7" y1="1167.86" x2="3103" y2="1167.86" stroke="#2f323b" stroke-width="2"/>
<line x1="530.7" y1="1105.5" x2="3103" y2="1105.5" stroke="#2f323b" stroke-width="2"/>
<line x1="530.7" y1="1043.1399999999999" x2="3103" y2="1043.1399999999999" stroke="#2f323b" stroke-width="2"/>
<line x1="530.7" y1="980.7800000000001" x2="3103" y2="980.7800000000001" stroke="#2f323b" stroke-width="2"/>
<line x1="530.7" y1="918.4200000000001" x2="3103" y2="918.4200000000001" stroke="#2f323b" stroke-width="2"/>
<line x1="530.7" y1="856.06" x2="3103" y2="856.06" stroke="#2f323b" stroke-width="2"/>
<line x1="530.7" y1="793.7" x2="3103" y2="793.7" stroke="#2f323b" stroke-width="2"/>
<rect x="530.20" y="1393.10" width="38.8" height="2.80" fill="#f28b2c"/>
<rect x="530.20" y="1395.90" width="38.8" height="12.30" fill="#4f9c3a"/>
<rect x="530.20" y="1408.20" width="38.8" height="9.10" fill="#3777b6"/>
<rect x="573.07" y="1395.90" width="38.8" height="1.80" fill="#f28b2c"/>
<rect x="573.07" y="1397.70" width="38.8" height="11.70" fill="#4f9c3a"/>
<rect x="573.07" y="1409.40" width="38.8" height="7.90" fill="#3777b6"/>
<rect x="615.94" y="1408.90" width="38.8" height="0.90" fill="#f28b2c"/>
<rect x="615.94" y="1409.80" width="38.8" height="4.20" fill="#4f9c3a"/>
<rect x="615.94" y="1414.00" width="38.8" height="3.30" fill="#3777b6"/>
<rect x="658.82" y="1410.80" width="38.8" height="0.90" fill="#f28b2c"/>
<rect x="658.82" y="1411.70" width="38.8" height="2.80" fill="#4f9c3a"/>
<rect x="658.82" y="1414.50" width="38.8" height="2.80" fill="#3777b6"/>
<rect x="701.69" y="1401.00" width="38.8" height="1.90" fill="#f28b2c"/>
<rect x="701.69" y="1402.90" width="38.8" height="7.60" fill="#4f9c3a"/>
<rect x="701.69" y="1410.50" width="38.8" height="6.80" fill="#3777b6"/>
<rect x="744.56" y="1406.10" width="38.8" height="1.20" fill="#f28b2c"/>
<rect x="744.56" y="1407.30" width="38.8" height="6.00" fill="#4f9c3a"/>
<rect x="744.56" y="1413.30" width="38.8" height="4.00" fill="#3777b6"/>
<rect x="830.30" y="1410.30" width="38.8" height="1.00" fill="#f28b2c"/>
<rect x="830.30" y="1411.30" width="38.8" height="3.20" fill="#4f9c3a"/>
<rect x="830.30" y="1414.50" width="38.8" height="2.80" fill="#3777b6"/>
<rect x="916.05" y="1393.80" width="38.8" height="2.10" fill="#f28b2c"/>
<rect x="916.05" y="1395.90" width="38.8" height="13.50" fill="#4f9c3a"/>
<rect x="916.05" y="1409.40" width="38.8" height="7.90" fill="#3777b6"/>
<rect x="958.92" y="1384.50" width="38.8" height="3.40" fill="#f28b2c"/>
<rect x="958.92" y="1387.90" width="38.8" height="17.30" fill="#4f9c3a"/>
<rect x="958.92" y="1405.20" width="38.8" height="12.10" fill="#3777b6"/>
<rect x="1044.66" y="1406.60" width="38.8" height="1.10" fill="#f28b2c"/>
<rect x="1044.66" y="1407.70" width="38.8" height="5.60" fill="#4f9c3a"/>
<rect x="1044.66" y="1413.30" width="38.8" height="4.00" fill="#3777b6"/>
<rect x="1087.53" y="1381.90" width="38.8" height="1.90" fill="#f28b2c"/>
<rect x="1087.53" y="1383.80" width="38.8" height="19.80" fill="#4f9c3a"/>
<rect x="1087.53" y="1403.60" width="38.8" height="13.70" fill="#3777b6"/>
<rect x="1130.40" y="1398.40" width="38.8" height="1.90" fill="#f28b2c"/>
<rect x="1130.40" y="1400.30" width="38.8" height="10.00" fill="#4f9c3a"/>
<rect x="1130.40" y="1410.30" width="38.8" height="7.00" fill="#3777b6"/>
<rect x="1173.28" y="1403.30" width="38.8" height="1.90" fill="#f28b2c"/>
<rect x="1173.28" y="1405.20" width="38.8" height="6.70" fill="#4f9c3a"/>
<rect x="1173.28" y="1411.90" width="38.8" height="5.40" fill="#3777b6"/>
<rect x="1216.15" y="1406.40" width="38.8" height="1.80" fill="#f28b2c"/>
<rect x="1216.15" y="1408.20" width="38.8" height="4.70" fill="#4f9c3a"/>
<rect x="1216.15" y="1412.90" width="38.8" height="4.40" fill="#3777b6"/>
<rect x="1259.02" y="1406.40" width="38.8" height="1.30" fill="#f28b2c"/>
<rect x="1259.02" y="1407.70" width="38.8" height="6.30" fill="#4f9c3a"/>
<rect x="1259.02" y="1414.00" width="38.8" height="3.30" fill="#3777b6"/>
<rect x="1301.89" y="1398.40" width="38.8" height="1.90" fill="#f28b2c"/>
<rect x="1301.89" y="1400.30" width="38.8" height="10.20" fill="#4f9c3a"/>
<rect x="1301.89" y="1410.50" width="38.8" height="6.80" fill="#3777b6"/>
<rect x="1387.63" y="1397.00" width="38.8" height="1.90" fill="#f28b2c"/>
<rect x="1387.63" y="1398.90" width="38.8" height="10.90" fill="#4f9c3a"/>
<rect x="1387.63" y="1409.80" width="38.8" height="7.50" fill="#3777b6"/>
<rect x="1430.51" y="1406.80" width="38.8" height="1.20" fill="#f28b2c"/>
<rect x="1430.51" y="1408.00" width="38.8" height="5.60" fill="#4f9c3a"/>
<rect x="1430.51" y="1413.60" width="38.8" height="3.70" fill="#3777b6"/>
<rect x="1473.38" y="1411.20" width="38.8" height="0.70" fill="#f28b2c"/>
<rect x="1473.38" y="1411.90" width="38.8" height="3.10" fill="#4f9c3a"/>
<rect x="1473.38" y="1415.00" width="38.8" height="2.30" fill="#3777b6"/>
<rect x="1516.25" y="1414.10" width="38.8" height="0.20" fill="#f28b2c"/>
<rect x="1516.25" y="1414.30" width="38.8" height="1.80" fill="#4f9c3a"/>
<rect x="1516.25" y="1416.10" width="38.8" height="1.20" fill="#3777b6"/>
<rect x="1559.12" y="1408.40" width="38.8" height="1.40" fill="#f28b2c"/>
<rect x="1559.12" y="1409.80" width="38.8" height="4.50" fill="#4f9c3a"/>
<rect x="1559.12" y="1414.30" width="38.8" height="3.00" fill="#3777b6"/>
<rect x="1601.99" y="1391.20" width="38.8" height="3.30" fill="#f28b2c"/>
<rect x="1601.99" y="1394.50" width="38.8" height="13.50" fill="#4f9c3a"/>
<rect x="1601.99" y="1408.00" width="38.8" height="9.30" fill="#3777b6"/>
<rect x="1687.74" y="1406.60" width="38.8" height="1.10" fill="#f28b2c"/>
<rect x="1687.74" y="1407.70" width="38.8" height="5.40" fill="#4f9c3a"/>
<rect x="1687.74" y="1413.10" width="38.8" height="4.20" fill="#3777b6"/>
<rect x="1730.61" y="1408.70" width="38.8" height="0.20" fill="#f28b2c"/>
<rect x="1730.61" y="1408.90" width="38.8" height="5.10" fill="#4f9c3a"/>
<rect x="1730.61" y="1414.00" width="38.8" height="3.30" fill="#3777b6"/>
<rect x="1773.48" y="1411.50" width="38.8" height="0.90" fill="#f28b2c"/>
<rect x="1773.48" y="1412.40" width="38.8" height="2.80" fill="#4f9c3a"/>
<rect x="1773.48" y="1415.20" width="38.8" height="2.10" fill="#3777b6"/>
<rect x="1816.35" y="1397.50" width="38.8" height="1.90" fill="#f28b2c"/>
<rect x="1816.35" y="1399.40" width="38.8" height="10.90" fill="#4f9c3a"/>
<rect x="1816.35" y="1410.30" width="38.8" height="7.00" fill="#3777b6"/>
<rect x="1859.22" y="1411.50" width="38.8" height="0.90" fill="#f28b2c"/>
<rect x="1859.22" y="1412.40" width="38.8" height="2.80" fill="#4f9c3a"/>
<rect x="1859.22" y="1415.20" width="38.8" height="2.10" fill="#3777b6"/>
<rect x="1987.84" y="1400.80" width="38.8" height="2.10" fill="#f28b2c"/>
<rect x="1987.84" y="1402.90" width="38.8" height="8.10" fill="#4f9c3a"/>
<rect x="1987.84" y="1411.00" width="38.8" height="6.30" fill="#3777b6"/>
<rect x="2030.71" y="1401.50" width="38.8" height="2.50" fill="#f28b2c"/>
<rect x="2030.71" y="1404.00" width="38.8" height="7.90" fill="#4f9c3a"/>
<rect x="2030.71" y="1411.90" width="38.8" height="5.40" fill="#3777b6"/>
<rect x="2073.58" y="1408.00" width="38.8" height="0.90" fill="#f28b2c"/>
<rect x="2073.58" y="1408.90" width="38.8" height="4.90" fill="#4f9c3a"/>
<rect x="2073.58" y="1413.80" width="38.8" height="3.50" fill="#3777b6"/>
<rect x="2116.45" y="1413.80" width="38.8" height="0.20" fill="#f28b2c"/>
<rect x="2116.45" y="1414.00" width="38.8" height="1.90" fill="#4f9c3a"/>
<rect x="2116.45" y="1415.90" width="38.8" height="1.40" fill="#3777b6"/>
<rect x="2202.20" y="1407.30" width="38.8" height="1.10" fill="#f28b2c"/>
<rect x="2202.20" y="1408.40" width="38.8" height="5.90" fill="#4f9c3a"/>
<rect x="2202.20" y="1414.30" width="38.8" height="3.00" fill="#3777b6"/>
<rect x="2287.94" y="1407.50" width="38.8" height="1.20" fill="#f28b2c"/>
<rect x="2287.94" y="1408.70" width="38.8" height="5.30" fill="#4f9c3a"/>
<rect x="2287.94" y="1414.00" width="38.8" height="3.30" fill="#3777b6"/>
<rect x="2330.81" y="1411.70" width="38.8" height="0.90" fill="#f28b2c"/>
<rect x="2330.81" y="1412.60" width="38.8" height="2.80" fill="#4f9c3a"/>
<rect x="2330.81" y="1415.40" width="38.8" height="1.90" fill="#3777b6"/>
<rect x="2373.68" y="1405.90" width="38.8" height="1.40" fill="#f28b2c"/>
<rect x="2373.68" y="1407.30" width="38.8" height="5.30" fill="#4f9c3a"/>
<rect x="2373.68" y="1412.60" width="38.8" height="4.70" fill="#3777b6"/>
<rect x="2459.43" y="1411.70" width="38.8" height="0.50" fill="#f28b2c"/>
<rect x="2459.43" y="1412.20" width="38.8" height="3.20" fill="#4f9c3a"/>
<rect x="2459.43" y="1415.40" width="38.8" height="1.90" fill="#3777b6"/>
<rect x="2502.30" y="1408.00" width="38.8" height="0.90" fill="#f28b2c"/>
<rect x="2502.30" y="1408.90" width="38.8" height="4.70" fill="#4f9c3a"/>
<rect x="2502.30" y="1413.60" width="38.8" height="3.70" fill="#3777b6"/>
<rect x="2545.17" y="1389.30" width="38.8" height="2.80" fill="#f28b2c"/>
<rect x="2545.17" y="1392.10" width="38.8" height="15.20" fill="#4f9c3a"/>
<rect x="2545.17" y="1407.30" width="38.8" height="10.00" fill="#3777b6"/>
<rect x="2588.04" y="1401.50" width="38.8" height="0.70" fill="#f28b2c"/>
<rect x="2588.04" y="1402.20" width="38.8" height="8.60" fill="#4f9c3a"/>
<rect x="2588.04" y="1410.80" width="38.8" height="6.50" fill="#3777b6"/>
<rect x="2673.78" y="1380.50" width="38.8" height="1.40" fill="#f28b2c"/>
<rect x="2673.78" y="1381.90" width="38.8" height="2.10" fill="#4f9c3a"/>
<rect x="2673.78" y="1384.00" width="38.8" height="33.30" fill="#3777b6"/>
<rect x="2716.65" y="982.40" width="38.8" height="2.90" fill="#f28b2c"/>
<rect x="2716.65" y="985.30" width="38.8" height="13.40" fill="#4f9c3a"/>
<rect x="2716.65" y="998.70" width="38.8" height="418.60" fill="#3777b6"/>
<rect x="2759.53" y="1305.30" width="38.8" height="2.80" fill="#f28b2c"/>
<rect x="2759.53" y="1308.10" width="38.8" height="8.20" fill="#4f9c3a"/>
<rect x="2759.53" y="1316.30" width="38.8" height="101.00" fill="#3777b6"/>
<rect x="2802.40" y="1186.70" width="38.8" height="0.60" fill="#f28b2c"/>
<rect x="2802.40" y="1187.30" width="38.8" height="5.80" fill="#4f9c3a"/>
<rect x="2802.40" y="1193.10" width="38.8" height="224.20" fill="#3777b6"/>
<rect x="2845.27" y="1342.60" width="38.8" height="1.70" fill="#f28b2c"/>
<rect x="2845.27" y="1344.30" width="38.8" height="5.30" fill="#4f9c3a"/>
<rect x="2845.27" y="1349.60" width="38.8" height="67.70" fill="#3777b6"/>
<rect x="2973.89" y="823.00" width="38.8" height="2.90" fill="#f28b2c"/>
<rect x="2973.89" y="825.90" width="38.8" height="15.80" fill="#4f9c3a"/>
<rect x="2973.89" y="841.70" width="38.8" height="575.60" fill="#3777b6"/>
<rect x="3016.76" y="1187.30" width="38.8" height="0.60" fill="#f28b2c"/>
<rect x="3016.76" y="1187.90" width="38.8" height="5.20" fill="#4f9c3a"/>
<rect x="3016.76" y="1193.10" width="38.8" height="224.20" fill="#3777b6"/>
<rect x="3059.63" y="1219.40" width="38.8" height="0.60" fill="#f28b2c"/>
<rect x="3059.63" y="1220.00" width="38.8" height="8.20" fill="#4f9c3a"/>
<rect x="3059.63" y="1228.20" width="38.8" height="189.10" fill="#3777b6"/>
<line x1="530.7" y1="793.7" x2="530.7" y2="1427.3" stroke="#9b9b9b" stroke-width="2"/>
<line x1="520.7" y1="1417.3" x2="3103" y2="1417.3" stroke="#9b9b9b" stroke-width="2"/>
<line x1="520.7" y1="1417.3" x2="530.7" y2="1417.3" stroke="#9b9b9b" stroke-width="2"/>
<line x1="520.7" y1="1354.94" x2="530.7" y2="1354.94" stroke="#9b9b9b" stroke-width="2"/>
<line x1="520.7" y1="1292.58" x2="530.7" y2="1292.58" stroke="#9b9b9b" stroke-width="2"/>
<line x1="520.7" y1="1230.22" x2="530.7" y2="1230.22" stroke="#9b9b9b" stroke-width="2"/>
<line x1="520.7" y1="1167.86" x2="530.7" y2="1167.86" stroke="#9b9b9b" stroke-width="2"/>
<line x1="520.7" y1="1105.5" x2="530.7" y2="1105.5" stroke="#9b9b9b" stroke-width="2"/>
<line x1="520.7" y1="1043.1399999999999" x2="530.7" y2="1043.1399999999999" stroke="#9b9b9b" stroke-width="2"/>
<line x1="520.7" y1="980.7800000000001" x2="530.7" y2="980.7800000000001" stroke="#9b9b9b" stroke-width="2"/>
<line x1="520.7" y1="918.4200000000001" x2="530.7" y2="918.4200000000001" stroke="#9b9b9b" stroke-width="2"/>
<line x1="520.7" y1="856.06" x2="530.7" y2="856.06" stroke="#9b9b9b" stroke-width="2"/>
<line x1="520.7" y1="793.7" x2="530.7" y2="793.7" stroke="#9b9b9b" stroke-width="2"/>
<line x1="530.7" y1="1417.3" x2="530.7" y2="1427.3" stroke="#9b9b9b" stroke-width="2"/>
<line x1="573.5716666666667" y1="1417.3" x2="573.5716666666667" y2="1427.3" stroke="#9b9b9b" stroke-width="2"/>
<line x1="616.4433333333334" y1="1417.3" x2="616.4433333333334" y2="1427.3" stroke="#9b9b9b" stroke-width="2"/>
<line x1="659.315" y1="1417.3" x2="659.315" y2="1427.3" stroke="#9b9b9b" stroke-width="2"/>
<line x1="702.1866666666667" y1="1417.3" x2="702.1866666666667" y2="1427.3" stroke="#9b9b9b" stroke-width="2"/>
<line x1="745.0583333333334" y1="1417.3" x2="745.0583333333334" y2="1427.3" stroke="#9b9b9b" stroke-width="2"/>
<line x1="787.9300000000001" y1="1417.3" x2="787.9300000000001" y2="1427.3" stroke="#9b9b9b" stroke-width="2"/>
<line x1="830.8016666666667" y1="1417.3" x2="830.8016666666667" y2="1427.3" stroke="#9b9b9b" stroke-width="2"/>
<line x1="873.6733333333334" y1="1417.3" x2="873.6733333333334" y2="1427.3" stroke="#9b9b9b" stroke-width="2"/>
<line x1="916.5450000000001" y1="1417.3" x2="916.5450000000001" y2="1427.3" stroke="#9b9b9b" stroke-width="2"/>
<line x1="959.4166666666667" y1="1417.3" x2="959.4166666666667" y2="1427.3" stroke="#9b9b9b" stroke-width="2"/>
<line x1="1002.2883333333334" y1="1417.3" x2="1002.2883333333334" y2="1427.3" stroke="#9b9b9b" stroke-width="2"/>
<line x1="1045.16" y1="1417.3" x2="1045.16" y2="1427.3" stroke="#9b9b9b" stroke-width="2"/>
<line x1="1088.0316666666668" y1="1417.3" x2="1088.0316666666668" y2="1427.3" stroke="#9b9b9b" stroke-width="2"/>
<line x1="1130.9033333333334" y1="1417.3" x2="1130.9033333333334" y2="1427.3" stroke="#9b9b9b" stroke-width="2"/>
<line x1="1173.775" y1="1417.3" x2="1173.775" y2="1427.3" stroke="#9b9b9b" stroke-width="2"/>
<line x1="1216.6466666666668" y1="1417.3" x2="1216.6466666666668" y2="1427.3" stroke="#9b9b9b" stroke-width="2"/>
<line x1="1259.5183333333334" y1="1417.3" x2="1259.5183333333334" y2="1427.3" stroke="#9b9b9b" stroke-width="2"/>
<line x1="1302.39" y1="1417.3" x2="1302.39" y2="1427.3" stroke="#9b9b9b" stroke-width="2"/>
<line x1="1345.2616666666668" y1="1417.3" x2="1345.2616666666668" y2="1427.3" stroke="#9b9b9b" stroke-width="2"/>
<line x1="1388.1333333333334" y1="1417.3" x2="1388.1333333333334" y2="1427.3" stroke="#9b9b9b" stroke-width="2"/>
<line x1="1431.005" y1="1417.3" x2="1431.005" y2="1427.3" stroke="#9b9b9b" stroke-width="2"/>
<line x1="1473.8766666666668" y1="1417.3" x2="1473.8766666666668" y2="1427.3" stroke="#9b9b9b" stroke-width="2"/>
<line x1="1516.7483333333334" y1="1417.3" x2="1516.7483333333334" y2="1427.3" stroke="#9b9b9b" stroke-width="2"/>
<line x1="1559.6200000000001" y1="1417.3" x2="1559.6200000000001" y2="1427.3" stroke="#9b9b9b" stroke-width="2"/>
<line x1="1602.4916666666668" y1="1417.3" x2="1602.4916666666668" y2="1427.3" stroke="#9b9b9b" stroke-width="2"/>
<line x1="1645.3633333333335" y1="1417.3" x2="1645.3633333333335" y2="1427.3" stroke="#9b9b9b" stroke-width="2"/>
<line x1="1688.2350000000001" y1="1417.3" x2="1688.2350000000001" y2="1427.3" stroke="#9b9b9b" stroke-width="2"/>
<line x1="1731.1066666666668" y1="1417.3" x2="1731.1066666666668" y2="1427.3" stroke="#9b9b9b" stroke-width="2"/>
<line x1="1773.9783333333335" y1="1417.3" x2="1773.9783333333335" y2="1427.3" stroke="#9b9b9b" stroke-width="2"/>
<line x1="1816.8500000000001" y1="1417.3" x2="1816.8500000000001" y2="1427.3" stroke="#9b9b9b" stroke-width="2"/>
<line x1="1859.7216666666668" y1="1417.3" x2="1859.7216666666668" y2="1427.3" stroke="#9b9b9b" stroke-width="2"/>
<line x1="1902.5933333333335" y1="1417.3" x2="1902.5933333333335" y2="1427.3" stroke="#9b9b9b" stroke-width="2"/>
<line x1="1945.4650000000001" y1="1417.3" x2="1945.4650000000001" y2="1427.3" stroke="#9b9b9b" stroke-width="2"/>
<line x1="1988.3366666666668" y1="1417.3" x2="1988.3366666666668" y2="1427.3" stroke="#9b9b9b" stroke-width="2"/>
<line x1="2031.2083333333335" y1="1417.3" x2="2031.2083333333335" y2="1427.3" stroke="#9b9b9b" stroke-width="2"/>
<line x1="2074.08" y1="1417.3" x2="2074.08" y2="1427.3" stroke="#9b9b9b" stroke-width="2"/>
<line x1="2116.951666666667" y1="1417.3" x2="2116.951666666667" y2="1427.3" stroke="#9b9b9b" stroke-width="2"/>
<line x1="2159.8233333333337" y1="1417.3" x2="2159.8233333333337" y2="1427.3" stroke="#9b9b9b" stroke-width="2"/>
<line x1="2202.695" y1="1417.3" x2="2202.695" y2="1427.3" stroke="#9b9b9b" stroke-width="2"/>
<line x1="2245.5666666666666" y1="1417.3" x2="2245.5666666666666" y2="1427.3" stroke="#9b9b9b" stroke-width="2"/>
<line x1="2288.4383333333335" y1="1417.3" x2="2288.4383333333335" y2="1427.3" stroke="#9b9b9b" stroke-width="2"/>
<line x1="2331.3100000000004" y1="1417.3" x2="2331.3100000000004" y2="1427.3" stroke="#9b9b9b" stroke-width="2"/>
<line x1="2374.181666666667" y1="1417.3" x2="2374.181666666667" y2="1427.3" stroke="#9b9b9b" stroke-width="2"/>
<line x1="2417.0533333333333" y1="1417.3" x2="2417.0533333333333" y2="1427.3" stroke="#9b9b9b" stroke-width="2"/>
<line x1="2459.925" y1="1417.3" x2="2459.925" y2="1427.3" stroke="#9b9b9b" stroke-width="2"/>
<line x1="2502.796666666667" y1="1417.3" x2="2502.796666666667" y2="1427.3" stroke="#9b9b9b" stroke-width="2"/>
<line x1="2545.6683333333335" y1="1417.3" x2="2545.6683333333335" y2="1427.3" stroke="#9b9b9b" stroke-width="2"/>
<line x1="2588.54" y1="1417.3" x2="2588.54" y2="1427.3" stroke="#9b9b9b" stroke-width="2"/>
<line x1="2631.411666666667" y1="1417.3" x2="2631.411666666667" y2="1427.3" stroke="#9b9b9b" stroke-width="2"/>
<line x1="2674.2833333333338" y1="1417.3" x2="2674.2833333333338" y2="1427.3" stroke="#9b9b9b" stroke-width="2"/>
<line x1="2717.1549999999997" y1="1417.3" x2="2717.1549999999997" y2="1427.3" stroke="#9b9b9b" stroke-width="2"/>
<line x1="2760.0266666666666" y1="1417.3" x2="2760.0266666666666" y2="1427.3" stroke="#9b9b9b" stroke-width="2"/>
<line x1="2802.8983333333335" y1="1417.3" x2="2802.8983333333335" y2="1427.3" stroke="#9b9b9b" stroke-width="2"/>
<line x1="2845.7700000000004" y1="1417.3" x2="2845.7700000000004" y2="1427.3" stroke="#9b9b9b" stroke-width="2"/>
<line x1="2888.6416666666664" y1="1417.3" x2="2888.6416666666664" y2="1427.3" stroke="#9b9b9b" stroke-width="2"/>
<line x1="2931.5133333333333" y1="1417.3" x2="2931.5133333333333" y2="1427.3" stroke="#9b9b9b" stroke-width="2"/>
<line x1="2974.385" y1="1417.3" x2="2974.385" y2="1427.3" stroke="#9b9b9b" stroke-width="2"/>
<line x1="3017.256666666667" y1="1417.3" x2="3017.256666666667" y2="1427.3" stroke="#9b9b9b" stroke-width="2"/>
<line x1="3060.128333333333" y1="1417.3" x2="3060.128333333333" y2="1427.3" stroke="#9b9b9b" stroke-width="2"/>
<line x1="3103.0" y1="1417.3" x2="3103.0" y2="1427.3" stroke="#9b9b9b" stroke-width="2"/>
<circle cx="439.6" cy="1484.8" r="10" fill="#3777b6"/>
<circle cx="695.8" cy="1484.8" r="10" fill="#4f9c3a"/>
<circle cx="833.7" cy="1484.8" r="10" fill="#f28b2c"/>
<path d="M3124,1493 A24,24 0 0 1 3113,1504 L3124,1504 Z" fill="#4b4a2e"/>
<path d="M3124,1493 A24,24 0 0 1 3113,1504" fill="none" stroke="#55565c" stroke-width="1.5"/>
</svg>
<div id="tx">
<div class="t" style="left:203.2px;top:31.1px;font-size:42px;line-height:42px;font-weight:700;color:#8a8ca2;transform:scaleX(0.8957);transform-origin:0 0;-webkit-text-stroke:0.2px currentColor;">Service:</div>
<div class="t" style="left:359.6px;top:31.1px;font-size:42px;line-height:42px;font-weight:700;color:#e6e7eb;transform:scaleX(0.9089);transform-origin:0 0;-webkit-text-stroke:0.2px currentColor;">checkout</div>
<div class="t" style="left:203.6px;top:82.6px;font-size:24px;line-height:24px;font-weight:400;color:#8a8ca2;">Environment:</div>
<div class="t" style="left:353.7px;top:80.9px;font-size:26px;line-height:26px;font-weight:700;color:#5bb98c;letter-spacing:-0.236px;-webkit-text-stroke:0.2px currentColor;">none</div>
<div class="t" style="left:499.3px;top:82.9px;font-size:24px;line-height:24px;font-weight:400;color:#8a8ca2;letter-spacing:0.035px;">Operation type:</div>
<div class="t" style="left:671.9px;top:81.2px;font-size:26px;line-height:26px;font-weight:700;color:#5bb98c;letter-spacing:0.501px;-webkit-text-stroke:0.2px currentColor;">Service entry point</div>
<div class="t" style="left:998.5px;top:82.9px;font-size:24px;line-height:24px;font-weight:400;color:#8a8ca2;letter-spacing:-0.146px;">Version:</div>
<div class="t" style="left:1092.3px;top:81.2px;font-size:26px;line-height:26px;font-weight:700;color:#5bb98c;letter-spacing:0.154px;-webkit-text-stroke:0.2px currentColor;">All versions</div>
<div class="t" style="left:102.3px;top:178.5px;font-size:28px;line-height:28px;font-weight:400;color:#f4f4f6;">Overview</div>
<div class="t" style="left:102.3px;top:242.4px;font-size:28px;line-height:28px;font-weight:400;color:#e6e7eb;">Endpoints</div>
<div class="t" style="left:102.3px;top:306.2px;font-size:28px;line-height:28px;font-weight:400;color:#e6e7eb;">Deployments</div>
<div class="t" style="left:102.3px;top:370.1px;font-size:28px;line-height:28px;font-weight:400;color:#e6e7eb;">Errors</div>
<div class="t" style="left:102.3px;top:433.9px;font-size:28px;line-height:28px;font-weight:400;color:#e6e7eb;">Exceptions</div>
<div class="t" style="left:102.3px;top:497.8px;font-size:28px;line-height:28px;font-weight:400;color:#e6e7eb;">Kubernetes pods</div>
<div class="t" style="left:102.3px;top:561.6px;font-size:28px;line-height:28px;font-weight:400;color:#e6e7eb;">Traces</div>
<div class="t" style="left:102.3px;top:625.5px;font-size:28px;line-height:28px;font-weight:400;color:#e6e7eb;">Dependencies</div>
<div class="t" style="left:2386.0px;top:164.3px;font-size:24px;line-height:24px;font-weight:700;color:#f4f4f6;letter-spacing:-0.616px;-webkit-text-stroke:0.2px currentColor;">1h</div>
<div class="t" style="left:2456.7px;top:162.6px;font-size:28px;line-height:28px;font-weight:400;color:#e6e7eb;letter-spacing:0.172px;">Today 07:10</div>
<div class="t" style="left:2649.3px;top:162.6px;font-size:28px;line-height:28px;font-weight:400;color:#e6e7eb;letter-spacing:0.955px;">08:10</div>
<div class="t" style="left:2755.8px;top:165.0px;font-size:22px;line-height:22px;font-weight:700;color:#8a8ca2;letter-spacing:-0.300px;-webkit-text-stroke:0.2px currentColor;">PDT</div>
<div class="t" style="left:431.4px;top:243.4px;font-size:27px;line-height:27px;font-weight:700;color:#f4f4f6;letter-spacing:-0.392px;-webkit-text-stroke:0.2px currentColor;">Requests</div>
<div class="t" style="left:574.7px;top:244.9px;font-size:24px;line-height:24px;font-weight:400;color:#e6e7eb;letter-spacing:-1.101px;">Rate</div>
<div class="t" style="left:694.7px;top:244.9px;font-size:24px;line-height:24px;font-weight:400;color:#e6e7eb;letter-spacing:0.028px;">Grouped by nothing</div>
<div class="t" style="left:978.7px;top:244.9px;font-size:24px;line-height:24px;font-weight:400;color:#e6e7eb;letter-spacing:-0.192px;">Compare to...</div>
<div class="t" style="left:1338.4px;top:243.4px;font-size:27px;line-height:27px;font-weight:700;color:#f4f4f6;letter-spacing:-0.689px;-webkit-text-stroke:0.2px currentColor;">Errors</div>
<div class="t" style="left:1439.4px;top:244.9px;font-size:24px;line-height:24px;font-weight:400;color:#e6e7eb;letter-spacing:-1.101px;">Rate</div>
<div class="t" style="left:1561.0px;top:244.9px;font-size:24px;line-height:24px;font-weight:400;color:#e6e7eb;letter-spacing:0.028px;">Grouped by nothing</div>
<div class="t" style="left:1844.6px;top:244.9px;font-size:24px;line-height:24px;font-weight:400;color:#e6e7eb;letter-spacing:-0.192px;">Compare to...</div>
<div class="t" style="left:2245.8px;top:243.4px;font-size:27px;line-height:27px;font-weight:700;color:#f4f4f6;letter-spacing:-0.071px;-webkit-text-stroke:0.2px currentColor;">Duration</div>
<div class="t" style="left:2380.2px;top:244.9px;font-size:24px;line-height:24px;font-weight:400;color:#e6e7eb;letter-spacing:0.314px;">Distribution</div>
<div class="t" style="left:2563.3px;top:244.9px;font-size:24px;line-height:24px;font-weight:400;color:#e6e7eb;letter-spacing:0.051px;">Grouped by nothing</div>
<div class="t" style="left:2797.7px;top:244.9px;font-size:24px;line-height:24px;font-weight:400;color:#6d6f80;letter-spacing:-0.217px;">Compare to...</div>
<div class="t" style="left:490.8px;top:576.7px;font-size:21px;line-height:21px;font-weight:400;color:#e4e4e8;">0</div>
<div class="t" style="left:461.6px;top:495.1px;font-size:21px;line-height:21px;font-weight:400;color:#e4e4e8;">0.02</div>
<div class="t" style="left:461.6px;top:415.3px;font-size:21px;line-height:21px;font-weight:400;color:#e4e4e8;">0.04</div>
<div class="t" style="left:461.6px;top:333.3px;font-size:21px;line-height:21px;font-weight:400;color:#e4e4e8;">0.06</div>
<div class="t" style="left:517.7px;top:601.0px;font-size:21px;line-height:21px;font-weight:400;color:#e4e4e8;">07:10:00</div>
<div class="t" style="left:733.6px;top:601.0px;font-size:21px;line-height:21px;font-weight:400;color:#e4e4e8;">07:30:00</div>
<div class="t" style="left:989.7px;top:601.0px;font-size:21px;line-height:21px;font-weight:400;color:#e4e4e8;">07:50:00</div>
<div class="t" style="left:1206.8px;top:601.0px;font-size:21px;line-height:21px;font-weight:400;color:#e4e4e8;">08:10:00</div>
<div class="t" style="left:1362.1px;top:576.7px;font-size:21px;line-height:21px;font-weight:400;color:#e4e4e8;">0</div>
<div class="t" style="left:1350.4px;top:521.9px;font-size:21px;line-height:21px;font-weight:400;color:#e4e4e8;">20</div>
<div class="t" style="left:1350.4px;top:467.1px;font-size:21px;line-height:21px;font-weight:400;color:#e4e4e8;">40</div>
<div class="t" style="left:1350.4px;top:412.4px;font-size:21px;line-height:21px;font-weight:400;color:#e4e4e8;">60</div>
<div class="t" style="left:1350.4px;top:357.6px;font-size:21px;line-height:21px;font-weight:400;color:#e4e4e8;">80</div>
<div class="t" style="left:1338.8px;top:302.9px;font-size:21px;line-height:21px;font-weight:400;color:#e4e4e8;">100</div>
<div class="t" style="left:1388.8px;top:601.0px;font-size:21px;line-height:21px;font-weight:400;color:#e4e4e8;">07:10:00</div>
<div class="t" style="left:1481.6px;top:601.0px;font-size:21px;line-height:21px;font-weight:400;color:#e4e4e8;">07:20:00</div>
<div class="t" style="left:1616.3px;top:601.0px;font-size:21px;line-height:21px;font-weight:400;color:#e4e4e8;">07:30:00</div>
<div class="t" style="left:1751.0px;top:601.0px;font-size:21px;line-height:21px;font-weight:400;color:#e4e4e8;">07:40:00</div>
<div class="t" style="left:1885.7px;top:601.0px;font-size:21px;line-height:21px;font-weight:400;color:#e4e4e8;">07:50:00</div>
<div class="t" style="left:2020.4px;top:601.0px;font-size:21px;line-height:21px;font-weight:400;color:#e4e4e8;">08:00:00</div>
<div class="t" style="left:2114.2px;top:601.0px;font-size:21px;line-height:21px;font-weight:400;color:#e4e4e8;">08:10:00</div>
<div class="t" style="left:2246.2px;top:321.6px;font-size:21px;line-height:21px;font-weight:400;color:#e4e4e8;">20</div>
<div class="t" style="left:2246.2px;top:344.4px;font-size:21px;line-height:21px;font-weight:400;color:#e4e4e8;">15</div>
<div class="t" style="left:2246.2px;top:375.7px;font-size:21px;line-height:21px;font-weight:400;color:#e4e4e8;">10</div>
<div class="t" style="left:2257.9px;top:426.5px;font-size:21px;line-height:21px;font-weight:400;color:#e4e4e8;">5</div>
<div class="t" style="left:2257.9px;top:576.6px;font-size:21px;line-height:21px;font-weight:400;color:#e4e4e8;">0</div>
<div class="t" style="left:2262.9px;top:601.5px;font-size:21px;line-height:21px;font-weight:400;color:#e4e4e8;">9.56ms</div>
<div class="t" style="left:2366.5px;top:601.5px;font-size:21px;line-height:21px;font-weight:400;color:#e4e4e8;">17.87ms</div>
<div class="t" style="left:2476.0px;top:601.5px;font-size:21px;line-height:21px;font-weight:400;color:#e4e4e8;">33.39ms</div>
<div class="t" style="left:2585.4px;top:601.5px;font-size:21px;line-height:21px;font-weight:400;color:#e4e4e8;">62.40ms</div>
<div class="t" style="left:2689.7px;top:601.5px;font-size:21px;line-height:21px;font-weight:400;color:#e4e4e8;">116.60ms</div>
<div class="t" style="left:2798.4px;top:601.5px;font-size:21px;line-height:21px;font-weight:400;color:#e4e4e8;">217.87ms</div>
<div class="t" style="left:2907.8px;top:601.5px;font-size:21px;line-height:21px;font-weight:400;color:#e4e4e8;">407.09ms</div>
<div class="t" style="left:3017.2px;top:601.5px;font-size:21px;line-height:21px;font-weight:400;color:#e4e4e8;">760.68ms</div>
<div class="t" style="left:430.8px;top:675.2px;font-size:27px;line-height:27px;font-weight:700;color:#f4f4f6;letter-spacing:0.180px;-webkit-text-stroke:0.2px currentColor;">Performance breakdown</div>
<div class="t" style="left:444.6px;top:724.0px;font-size:24px;line-height:24px;font-weight:400;color:#e6e7eb;letter-spacing:0.287px;">Total time spent</div>
<div class="t" style="left:736.6px;top:724.0px;font-size:24px;line-height:24px;font-weight:400;color:#646675;letter-spacing:0.062px;">service kind</div>
<div class="t" style="left:949.5px;top:724.0px;font-size:24px;line-height:24px;font-weight:400;color:#e6e7eb;letter-spacing:0.134px;">downstream service</div>
<div class="t" style="left:1250.6px;top:724.0px;font-size:24px;line-height:24px;font-weight:400;color:#e6e7eb;letter-spacing:-0.052px;">database</div>
<div class="t" style="left:1434.0px;top:724.0px;font-size:24px;line-height:24px;font-weight:400;color:#e6e7eb;letter-spacing:0.365px;">operation</div>
<div class="t" style="left:482.6px;top:1405.6px;font-size:21px;line-height:21px;font-weight:400;color:#e4e4e8;">0ns</div>
<div class="t" style="left:453.5px;top:1343.2px;font-size:21px;line-height:21px;font-weight:400;color:#e4e4e8;">200ms</div>
<div class="t" style="left:453.5px;top:1280.8px;font-size:21px;line-height:21px;font-weight:400;color:#e4e4e8;">400ms</div>
<div class="t" style="left:453.5px;top:1218.5px;font-size:21px;line-height:21px;font-weight:400;color:#e4e4e8;">600ms</div>
<div class="t" style="left:453.5px;top:1156.1px;font-size:21px;line-height:21px;font-weight:400;color:#e4e4e8;">800ms</div>
<div class="t" style="left:494.3px;top:1093.8px;font-size:21px;line-height:21px;font-weight:400;color:#e4e4e8;">1s</div>
<div class="t" style="left:431.3px;top:1031.4px;font-size:21px;line-height:21px;font-weight:400;color:#e4e4e8;">1s200ms</div>
<div class="t" style="left:431.3px;top:969.0px;font-size:21px;line-height:21px;font-weight:400;color:#e4e4e8;">1s400ms</div>
<div class="t" style="left:431.3px;top:906.7px;font-size:21px;line-height:21px;font-weight:400;color:#e4e4e8;">1s600ms</div>
<div class="t" style="left:431.3px;top:844.3px;font-size:21px;line-height:21px;font-weight:400;color:#e4e4e8;">1s800ms</div>
<div class="t" style="left:494.3px;top:782.0px;font-size:21px;line-height:21px;font-weight:400;color:#e4e4e8;">2s</div>
<div class="t" style="left:531.7px;top:1429.8px;font-size:21px;line-height:21px;font-weight:400;color:#e4e4e8;">07:10:00</div>
<div class="t" style="left:661.3px;top:1429.8px;font-size:21px;line-height:21px;font-weight:400;color:#e4e4e8;">07:14:00</div>
<div class="t" style="left:832.8px;top:1429.8px;font-size:21px;line-height:21px;font-weight:400;color:#e4e4e8;">07:18:00</div>
<div class="t" style="left:1004.3px;top:1429.8px;font-size:21px;line-height:21px;font-weight:400;color:#e4e4e8;">07:22:00</div>
<div class="t" style="left:1175.8px;top:1429.8px;font-size:21px;line-height:21px;font-weight:400;color:#e4e4e8;">07:26:00</div>
<div class="t" style="left:1347.3px;top:1429.8px;font-size:21px;line-height:21px;font-weight:400;color:#e4e4e8;">07:30:00</div>
<div class="t" style="left:1518.7px;top:1429.8px;font-size:21px;line-height:21px;font-weight:400;color:#e4e4e8;">07:34:00</div>
<div class="t" style="left:1690.2px;top:1429.8px;font-size:21px;line-height:21px;font-weight:400;color:#e4e4e8;">07:38:00</div>
<div class="t" style="left:1861.7px;top:1429.8px;font-size:21px;line-height:21px;font-weight:400;color:#e4e4e8;">07:42:00</div>
<div class="t" style="left:2033.2px;top:1429.8px;font-size:21px;line-height:21px;font-weight:400;color:#e4e4e8;">07:46:00</div>
<div class="t" style="left:2204.7px;top:1429.8px;font-size:21px;line-height:21px;font-weight:400;color:#e4e4e8;">07:50:00</div>
<div class="t" style="left:2376.2px;top:1429.8px;font-size:21px;line-height:21px;font-weight:400;color:#e4e4e8;">07:54:00</div>
<div class="t" style="left:2547.7px;top:1429.8px;font-size:21px;line-height:21px;font-weight:400;color:#e4e4e8;">07:58:00</div>
<div class="t" style="left:2719.2px;top:1429.8px;font-size:21px;line-height:21px;font-weight:400;color:#e4e4e8;">08:02:00</div>
<div class="t" style="left:2890.6px;top:1429.8px;font-size:21px;line-height:21px;font-weight:400;color:#e4e4e8;">08:06:00</div>
<div class="t" style="left:3021.2px;top:1429.8px;font-size:21px;line-height:21px;font-weight:400;color:#e4e4e8;">08:10:00</div>
<div class="t" style="left:459.0px;top:1473.5px;font-size:24px;line-height:24px;font-weight:400;color:#e6e7eb;letter-spacing:-0.145px;">External Non-HTTP,</div>
<div class="t" style="left:714.7px;top:1473.5px;font-size:24px;line-height:24px;font-weight:400;color:#e6e7eb;letter-spacing:0.560px;">Internal,</div>
<div class="t" style="left:852.8px;top:1473.5px;font-size:24px;line-height:24px;font-weight:400;color:#e6e7eb;letter-spacing:-1.184px;">HTTP,</div>
<div style="position:absolute;left:443px;top:446.5px;width:0;height:0"><div class="t" style="left:0;top:0;transform:translate(-50%,-50%) rotate(-90deg);font-weight:700;font-size:22px;line-height:22px;color:#e4e4e8;-webkit-text-stroke:0.3px #e4e4e8">spans/sec</div></div>
</div>
</body></html>
